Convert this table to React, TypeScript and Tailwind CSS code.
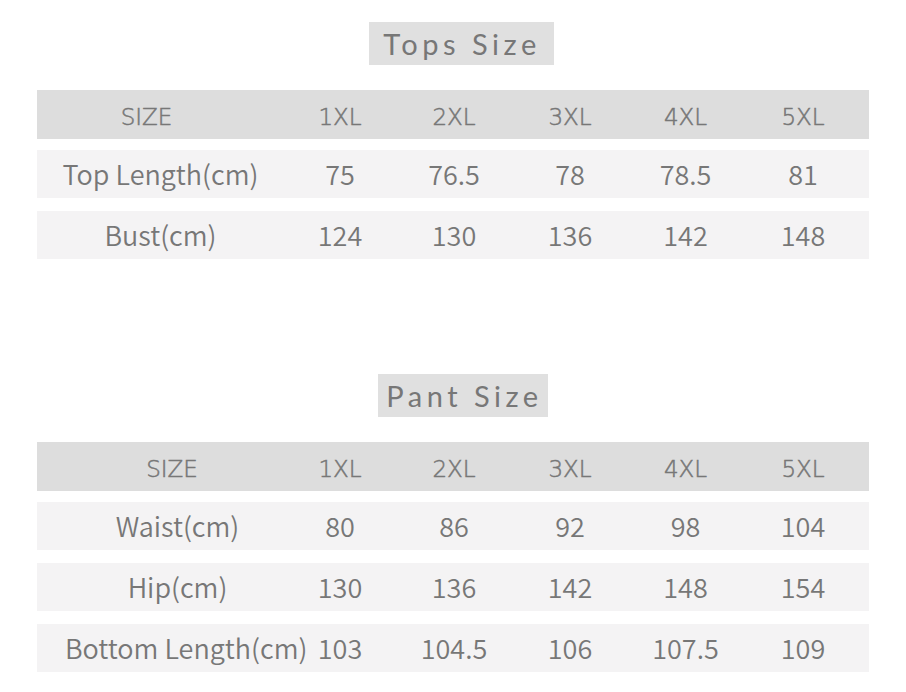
import React from 'react';

type Row = { label: string; labelCls?: string; values: string[] };

type Table = {
  title: string;
  titleCls: string;
  labelCls: string;
  sizeCls: string;
  rows: Row[];
};

const sizes = ['1XL', '2XL', '3XL', '4XL', '5XL'];

const tables: Table[] = [
  {
    title: 'Tops Size',
    titleCls: 'ml-[17px] pl-[14px] pr-[13px]',
    labelCls: 'text-center',
    sizeCls: 'pr-[28px]',
    rows: [
      { label: 'Top Length(cm)', values: ['75', '76.5', '78', '78.5', '81'] },
      { label: 'Bust(cm)', values: ['124', '130', '136', '142', '148'] },
    ],
  },
  {
    title: 'Pant Size',
    titleCls: 'ml-[20px] pl-[8px] pr-[5px]',
    labelCls: 'text-center pl-[34px]',
    sizeCls: 'pl-[23px]',
    rows: [
      { label: 'Waist(cm)', values: ['80', '86', '92', '98', '104'] },
      { label: 'Hip(cm)', values: ['130', '136', '142', '148', '154'] },
      { label: 'Bottom Length(cm)', labelCls: 'text-left pl-[28px]', values: ['103', '104.5', '106', '107.5', '109'] },
    ],
  },
];

const cols = 'grid grid-cols-[247px_112px_116px_116px_115px_120px] items-center';

const SizeTable = ({ table }: { table: Table }) => (
  <div className="flex flex-col items-center">
    <div className={`bg-[#e0e0e0] h-[43px] flex items-center font-['Lato',sans-serif] text-[29px] tracking-[4.5px] text-[#777777] ${table.titleCls}`}>
      {table.title}
    </div>
    <div className="w-[832px] mt-[25px] flex flex-col gap-[13px]">
      <div className={`${cols} bg-[#dddddd] h-[49px] pt-[6px] mb-[-2px] font-['DejaVu_Sans',sans-serif] text-[23px] font-extralight text-[#777777] [-webkit-text-stroke:0.5px_#777777]`}>
        <div className={`text-center ${table.sizeCls}`}>SIZE</div>
        {sizes.map((s) => (
          <div key={s} className="text-center">{s}</div>
        ))}
      </div>
      {table.rows.map((row) => (
        <div key={row.label} className={`${cols} bg-[#f4f3f4] h-[48px] text-[27px] font-[350] text-[#777777]`}>
          <div className={`whitespace-nowrap ${row.labelCls ?? table.labelCls}`}>{row.label}</div>
          {row.values.map((v, i) => (
            <div key={i} className="text-center">{v}</div>
          ))}
        </div>
      ))}
    </div>
  </div>
);

export default function App() {
  return (
    <div className="w-[906px] h-[692px] bg-white pt-[22px] flex flex-col gap-[115px] font-['Noto_Sans_CJK_SC','Noto_Sans',sans-serif] overflow-hidden">
      {tables.map((t) => (
        <SizeTable key={t.title} table={t} />
      ))}
    </div>
  );
}
